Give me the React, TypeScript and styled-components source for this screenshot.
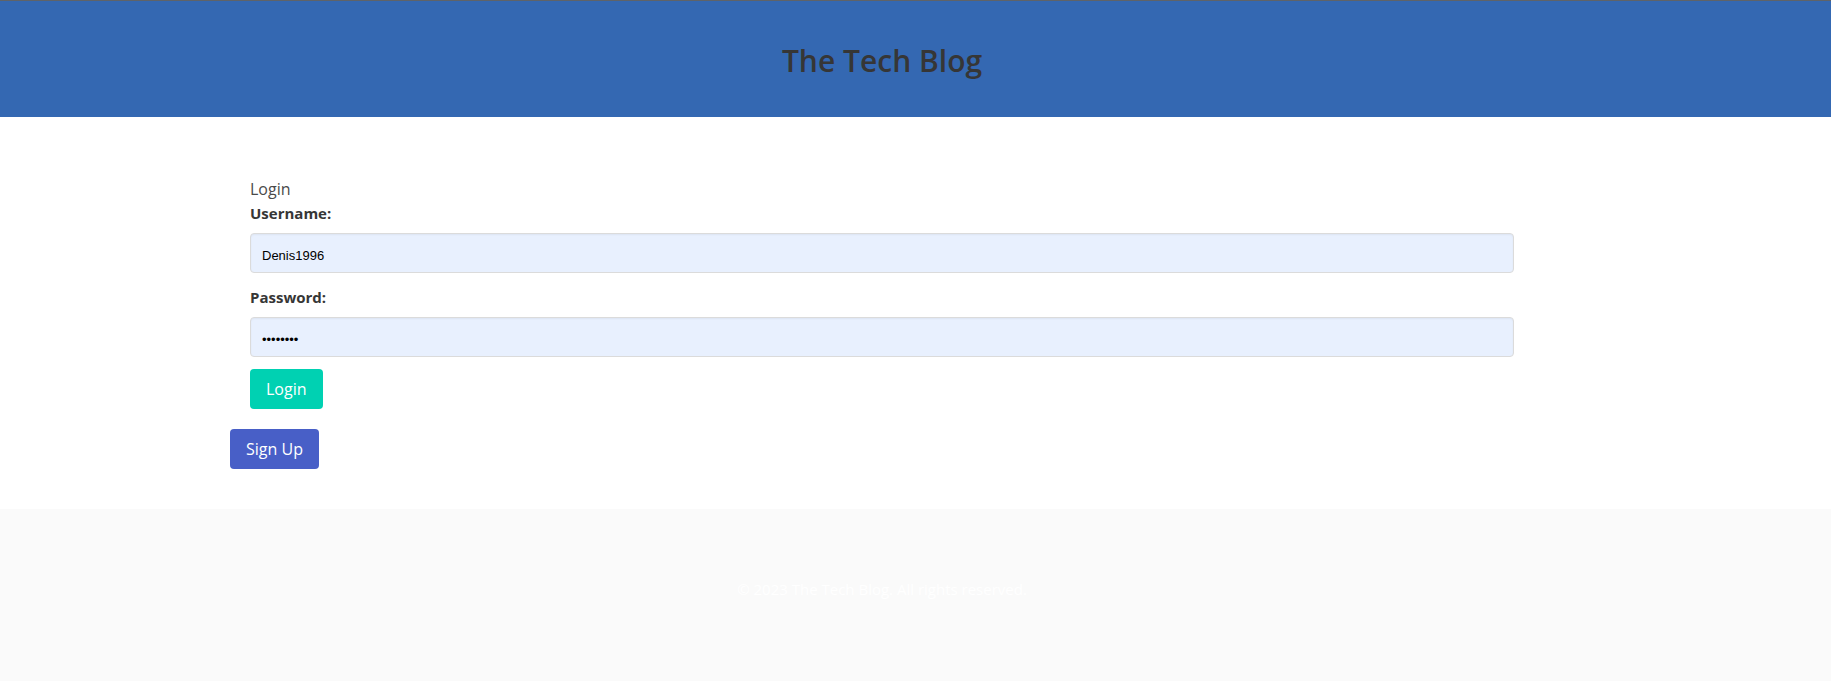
import React, { useState } from "react";
import styled, { createGlobalStyle } from "styled-components";

const GlobalStyle = createGlobalStyle`
  *, *::before, *::after { box-sizing: border-box; }
  html { background: #fff; }
  body {
    margin: 0;
    color: #4a4a4a;
    font-family: "Open Sans", "Noto Sans", sans-serif;
    font-size: 16px;
    line-height: 24px;
  }
  h1, p { margin: 0; }
`;

const Page = styled.div`
  display: flex;
  flex-direction: column;
  min-height: 100vh;
`;

const Header = styled.header`
  padding: 42px 67px 38px 0;
  border-top: 1px solid #5f6368;
  background: #3468b2;
  text-align: center;
`;

const Title = styled.h1`
  color: #363636;
  font-size: 30px;
  font-weight: 600;
  line-height: 36px;
`;

const Main = styled.main`
  padding: 40px 67px 40px 0;
`;

const Container = styled.div`
  max-width: 1304px;
  margin: 0 auto;
`;

const LoginForm = styled.form`
  padding: 20px;
`;

const Field = styled.div`
  margin-bottom: 12px;
`;

const Label = styled.label`
  display: block;
  margin-bottom: 8px;
  color: #363636;
  font-size: 15px;
  font-weight: 700;
`;

const Input = styled.input`
  display: block;
  width: 100%;
  height: 40px;
  padding: 4px 11px 0;
  border: 1px solid #dbdbdb;
  border-radius: 4px;
  background: #e8f0fe;
  box-shadow: inset 0 1px 2px rgba(10, 10, 10, 0.05);
  color: #000;
  font-family: "Liberation Sans", Arial, sans-serif;
  font-size: 13px;
`;

const Button = styled.button<{ $color: string }>`
  display: block;
  height: 40px;
  padding: 0 16px;
  border: 0;
  border-radius: 4px;
  background: ${({ $color }) => $color};
  color: #fff;
  font: inherit;
  cursor: pointer;
`;

const Footer = styled.footer`
  flex: 1;
  padding: 68px 67px 80px 0;
  background: #fafafa;
  color: #fff;
  font-size: 15px;
  text-align: center;
`;

export default function App() {
  const [username, setUsername] = useState("Denis1996");
  const [password, setPassword] = useState("password");

  return (
    <Page>
      <GlobalStyle />
      <Header>
        <Title>The Tech Blog</Title>
      </Header>
      <Main>
        <Container>
          <LoginForm onSubmit={(e) => e.preventDefault()}>
            <p>Login</p>
            <Field>
              <Label htmlFor="username">Username:</Label>
              <Input
                id="username"
                type="text"
                value={username}
                onChange={(e) => setUsername(e.target.value)}
              />
            </Field>
            <Field>
              <Label htmlFor="password">Password:</Label>
              <Input
                id="password"
                type="password"
                value={password}
                onChange={(e) => setPassword(e.target.value)}
              />
            </Field>
            <Button type="submit" $color="#00d1b2">Login</Button>
          </LoginForm>
          <Button type="button" $color="#485fc7">Sign Up</Button>
        </Container>
      </Main>
      <Footer>
        <p>© 2023 The Tech Blog. All rights reserved.</p>
      </Footer>
    </Page>
  );
}
